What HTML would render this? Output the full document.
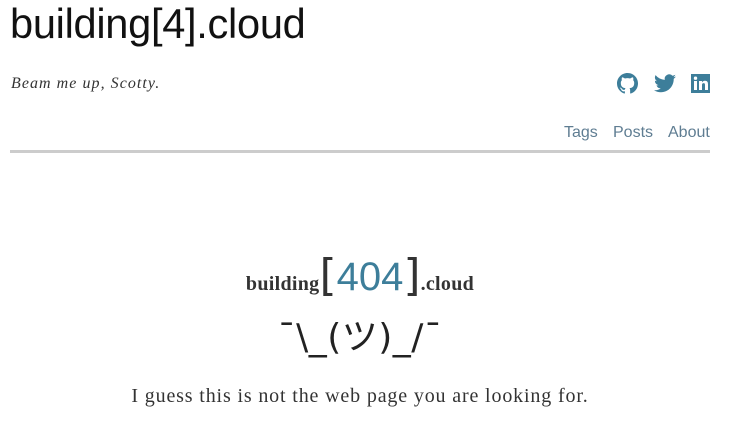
<!DOCTYPE html>
<html><head><meta charset="utf-8"><style>
body{margin:0;width:733px;height:446px;background:#fff;overflow:hidden;font-family:"Liberation Sans",sans-serif;color:#222;position:relative}
.a{position:absolute;white-space:nowrap}
h1{margin:0;font-weight:normal;font-size:42px;left:10px;top:0px;transform:scaleX(0.99);transform-origin:left top;color:#111;letter-spacing:-0.3px}
.tag{left:11px;top:75px;font-family:"Liberation Serif",serif;font-style:italic;font-size:16px;letter-spacing:1.05px;color:#333}
.nav{top:124px;font-size:16px;color:#5f7d92}
.rule{left:10px;top:150px;width:700px;height:3px;background:#ccc}
.logo{left:0;width:720px;top:250px;text-align:center;font-family:"Liberation Serif",serif;color:#333}
.shrug{left:0;width:720px;top:308px;text-align:center;font-size:36px;color:#222;font-family:"DejaVu Sans","Noto Sans CJK JP",sans-serif;letter-spacing:0.5px}
.msg{left:0;width:720px;top:385px;text-align:center;font-family:"Liberation Serif",serif;font-size:20px;letter-spacing:0.85px;color:#333}
</style></head><body>
<h1 class="a">building[4].cloud</h1>
<div class="a tag">Beam me up, Scotty.</div>
<svg class="a" style="left:617px;top:73px" width="21" height="21" viewBox="0 0 16 16"><path fill="#3d7e9a" d="M8 0C3.58 0 0 3.580 0 8c0 3.54 2.290 6.53 5.470 7.59.4.07.55-.17.55-.38v-1.33c-2.23.48-2.7-1.07-2.7-1.07-.36-.92-.89-1.170-.89-1.17-.73-.5.06-.49.06-.49.8.06 1.23.83 1.23.83.71 1.22 1.87.87 2.33.66.07-.52.28-.87.5-1.07-1.78-.2-3.64-.89-3.64-3.95 0-.87.31-1.59.83-2.15-.08-.2-.36-1.020.08-2.12 0 0 .67-.21 2.2.82a7.6 7.6 0 0 1 4 0c1.53-1.04 2.2-.82 2.2-.82.44 1.1.16 1.92.08 2.12.51.56.82 1.27.82 2.15 0 3.07-1.87 3.75-3.65 3.95.29.25.54.73.54 1.48v2.2c0 .21.15.46.55.38A8 8 0 0 0 16 8c0-4.42-3.58-8-8-8z"/></svg>
<svg class="a" style="left:654px;top:74px" width="22" height="19" viewBox="0 0 24 20"><path fill="#3d7e9a" d="M24 2.4a9.8 9.8 0 0 1-2.8.8A4.9 4.9 0 0 0 23.3.4a9.8 9.8 0 0 1-3.1 1.2A4.9 4.9 0 0 0 11.8 6 14 14 0 0 1 1.7.9a4.9 4.9 0 0 0 1.5 6.6A4.9 4.9 0 0 1 1 6.9v.1a4.9 4.9 0 0 0 3.9 4.8 4.9 4.9 0 0 1-2.2.1 4.9 4.9 0 0 0 4.6 3.4A9.9 9.9 0 0 1 0 17.3 14 14 0 0 0 7.5 19.5c9.1 0 14-7.5 14-14v-.6A10 10 0 0 0 24 2.4z"/></svg>
<svg class="a" style="left:691px;top:74px" width="19" height="19" viewBox="0 0 19 19"><rect width="19" height="19" fill="#3d7e9a"/><rect x="3" y="7" width="3" height="9" fill="#fff"/><circle cx="4.5" cy="4.2" r="1.7" fill="#fff"/><path fill="#fff" d="M8 7h3v1.4c.5-.9 1.6-1.6 3-1.6 2.4 0 3 1.5 3 3.6V16h-3v-5c0-1.1-.3-1.900-1.4-1.9S11 9.9 11 11v5H8z"/></svg>
<div class="a nav" style="left:564px">Tags</div>
<div class="a nav" style="left:613px">Posts</div>
<div class="a nav" style="left:668px">About</div>
<div class="a rule"></div>
<div class="a logo"><span style="font-size:20px;font-weight:bold;letter-spacing:0.3px">building</span><span style="font-size:44px;font-family:'DejaVu Sans',sans-serif;color:#333">[</span><span style="font-size:40px;font-family:'Liberation Sans',sans-serif;color:#3d7e9a">404</span><span style="font-size:44px;font-family:'DejaVu Sans',sans-serif;color:#333">]</span><span style="font-size:20px;font-weight:bold;letter-spacing:0.3px">.cloud</span></div>
<div class="a shrug">¯\_(ツ)_/¯</div>
<div class="a msg">I guess this is not the web page you are looking for.</div>
</body></html>
